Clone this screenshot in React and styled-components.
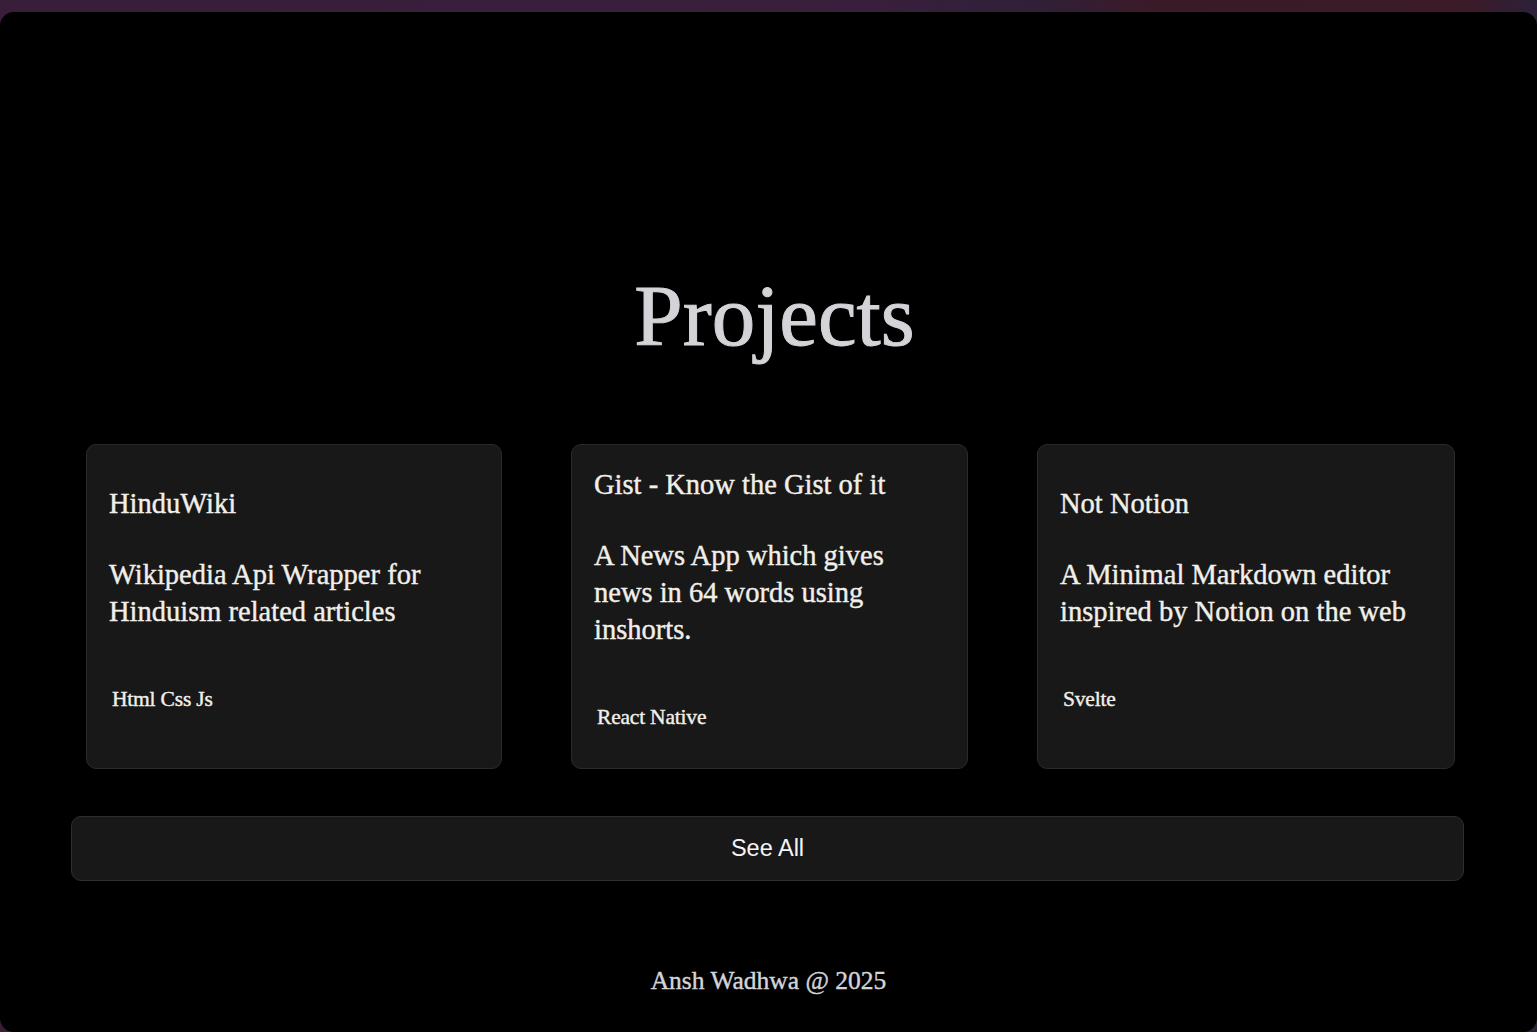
import styled, { createGlobalStyle } from "styled-components";

const GlobalStyle = createGlobalStyle`
  html, body {
    margin: 0;
    padding: 0;
  }
  body {
    background: linear-gradient(
      90deg,
      #391e3a 0%,
      #3a1f3c 55%,
      #2f2038 67%,
      #3b1a28 75%,
      #3c1a27 95%,
      #2c2139 100%
    );
    font-family: "Liberation Serif", "Times New Roman", serif;
    overflow: hidden;
  }
`;

// 검은 메인 패널
const Panel = styled.main`
  margin-top: 12px;
  height: 1020px;
  background: #000;
  border-radius: 14px;
  box-sizing: border-box;
  padding-top: 261px;
  display: flex;
  flex-direction: column;
`;

const Heading = styled.h1`
  margin: 0;
  padding-left: 12px;
  font-family: "Liberation Serif", serif;
  font-size: 87px;
  line-height: 86px;
  font-weight: 400;
  color: #d4d4d8;
  text-align: center;
  -webkit-text-stroke: 1px #d4d4d8;
`;

const Section = styled.section`
  width: 1393px;
  margin: 85px 0 0 71px;
  display: flex;
  flex-direction: column;
  gap: 47px;
`;

const CardRow = styled.div`
  display: flex;
  justify-content: space-between;
  align-items: stretch;
  padding: 0 9px 0 15px;
`;

const Card = styled.article`
  width: ${(p) => p.$w}px;
  box-sizing: border-box;
  background: #181818;
  border: 1px solid #2a2a2a;
  border-radius: 10px;
  padding: 21px 24px 21px 22px;
  display: flex;
  flex-direction: column;
  justify-content: center;
  color: #f1efe9;
  -webkit-text-stroke: 0.4px #f1efe9;
`;

const CardTitle = styled.h3`
  margin: 0;
  font-size: 28.5px;
  line-height: 37px;
  font-weight: 400;
`;

const CardText = styled.p`
  margin: 34px 0 0;
  font-size: 28.5px;
  line-height: 37px;
`;

const Tags = styled.div`
  margin: 55px 0 16px 3px;
  font-size: 21.5px;
  line-height: 28px;
  letter-spacing: -0.2px;
`;

const SeeAll = styled.button`
  height: 65px;
  background: #181818;
  border: 1px solid #2e2e2e;
  border-radius: 10px;
  color: #f5f5f5;
  font-family: "Liberation Sans", Arial, sans-serif;
  font-size: 23.5px;
  cursor: pointer;
`;

const Footer = styled.footer`
  margin-top: 84px;
  text-align: center;
  font-size: 25.5px;
  line-height: 32px;
  color: #d4d4d8;
  -webkit-text-stroke: 0.4px #d4d4d8;
`;

const projects = [
  {
    title: "HinduWiki",
    text: "Wikipedia Api Wrapper for Hinduism related articles",
    tags: "Html Css Js",
    w: 416,
  },
  {
    title: "Gist - Know the Gist of it",
    text: "A News App which gives news in 64 words using inshorts.",
    tags: "React Native",
    w: 397,
  },
  {
    title: "Not Notion",
    text: "A Minimal Markdown editor inspired by Notion on the web",
    tags: "Svelte",
    w: 418,
  },
];

const App = () => {
  return (
    <>
      <GlobalStyle />
      <Panel>
        <Heading>Projects</Heading>
        <Section>
          <CardRow>
            {projects.map((p) => (
              <Card key={p.title} $w={p.w}>
                <CardTitle>{p.title}</CardTitle>
                <CardText>{p.text}</CardText>
                <Tags>{p.tags}</Tags>
              </Card>
            ))}
          </CardRow>
          <SeeAll>See All</SeeAll>
        </Section>
        <Footer>Ansh Wadhwa @ 2025</Footer>
      </Panel>
    </>
  );
};

export default App;
